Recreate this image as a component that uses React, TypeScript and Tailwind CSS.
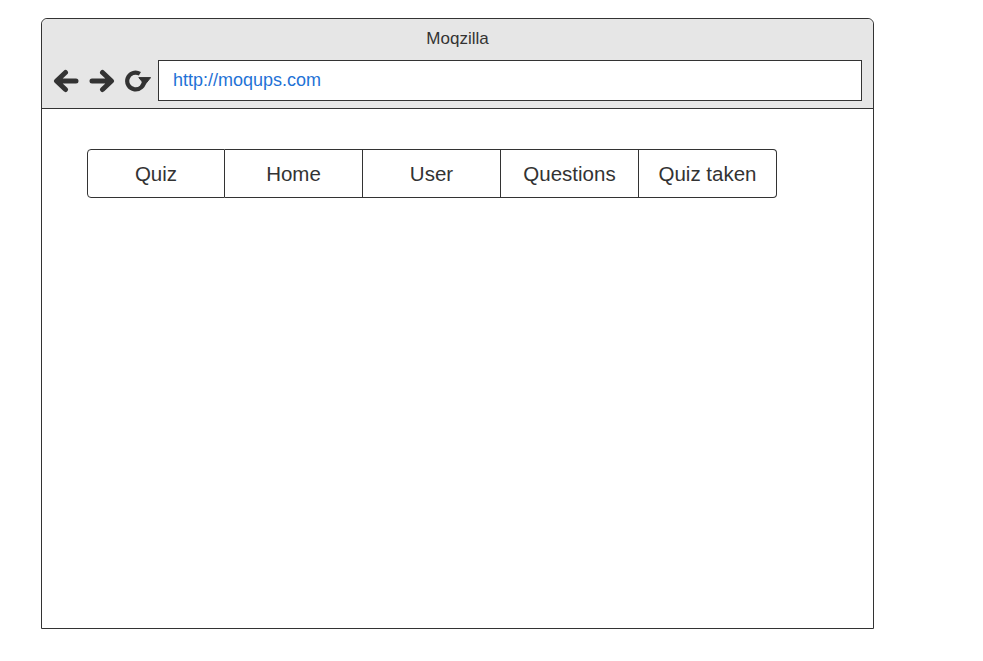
import React from "react";

const font = { fontFamily: '"Liberation Sans", Arial, sans-serif' };

function LeftArrow() {
  return (
    <svg width="26" height="24" viewBox="0 0 26 24" fill="none">
      <path d="M23 12H4.5M12.5 3.5L3.5 12L12.5 20.5" stroke="#333" strokeWidth="5" strokeLinecap="round" strokeLinejoin="round" />
    </svg>
  );
}
function RightArrow() {
  return (
    <svg width="26" height="24" viewBox="0 0 26 24" fill="none">
      <path d="M3 12H21.5M13.5 3.5L22.5 12L13.5 20.5" stroke="#333" strokeWidth="5" strokeLinecap="round" strokeLinejoin="round" />
    </svg>
  );
}
function Refresh() {
  return (
    <svg width="26" height="22" viewBox="0 0 26 22" fill="none">
      <path d="M14.9 3.8A8.4 8.4 0 1 0 19 10.5" stroke="#333" strokeWidth="4.2" strokeLinecap="butt" fill="none" />
      <path d="M13.8 7.6L25.6 7.6L19.8 14.8Z" fill="#333" stroke="#333" strokeWidth="1" strokeLinejoin="round" />
    </svg>
  );
}

const tabs = ["Quiz", "Home", "User", "Questions", "Quiz taken"];

export default function App() {
  return (
    <div className="w-[983px] h-[661px] bg-white pt-[18px] pl-[41px]" style={font}>
      <div className="w-[833px] h-[611px] border border-[#333] rounded-t-[6px] flex flex-col bg-white">
        <div className="h-[90px] bg-[#e6e6e6] rounded-t-[6px] border-b border-[#333] flex flex-col">
          <div className="h-[41px] flex items-center justify-center text-[17px] text-[#333] pb-[2px]">Moqzilla</div>
          <div className="flex items-center pl-[11px] pr-[11px]">
            <div className="flex items-center gap-[10px] pt-[1px]">
              <LeftArrow />
              <RightArrow />
              <Refresh />
            </div>
            <div className="ml-[7px] flex-1 h-[41px] bg-white border border-[#333] flex items-center pl-[14px] text-[18px] text-[#1f72d6]">
              http://moqups.com
            </div>
          </div>
        </div>
        <div className="pl-[45px] pt-[40px]">
          <div className="flex">
            {tabs.map((t, i) => (
              <div
                key={t}
                className={
                  "w-[138px] h-[49px] flex items-center justify-center pt-[2px] text-[20.5px] text-[#333] border-y border-r border-[#333] " +
                  (i === 0 ? "border-l rounded-l-[4px] " : "") +
                  (i === tabs.length - 1 ? "rounded-r-[4px]" : "")
                }
              >
                {t}
              </div>
            ))}
          </div>
        </div>
      </div>
    </div>
  );
}
